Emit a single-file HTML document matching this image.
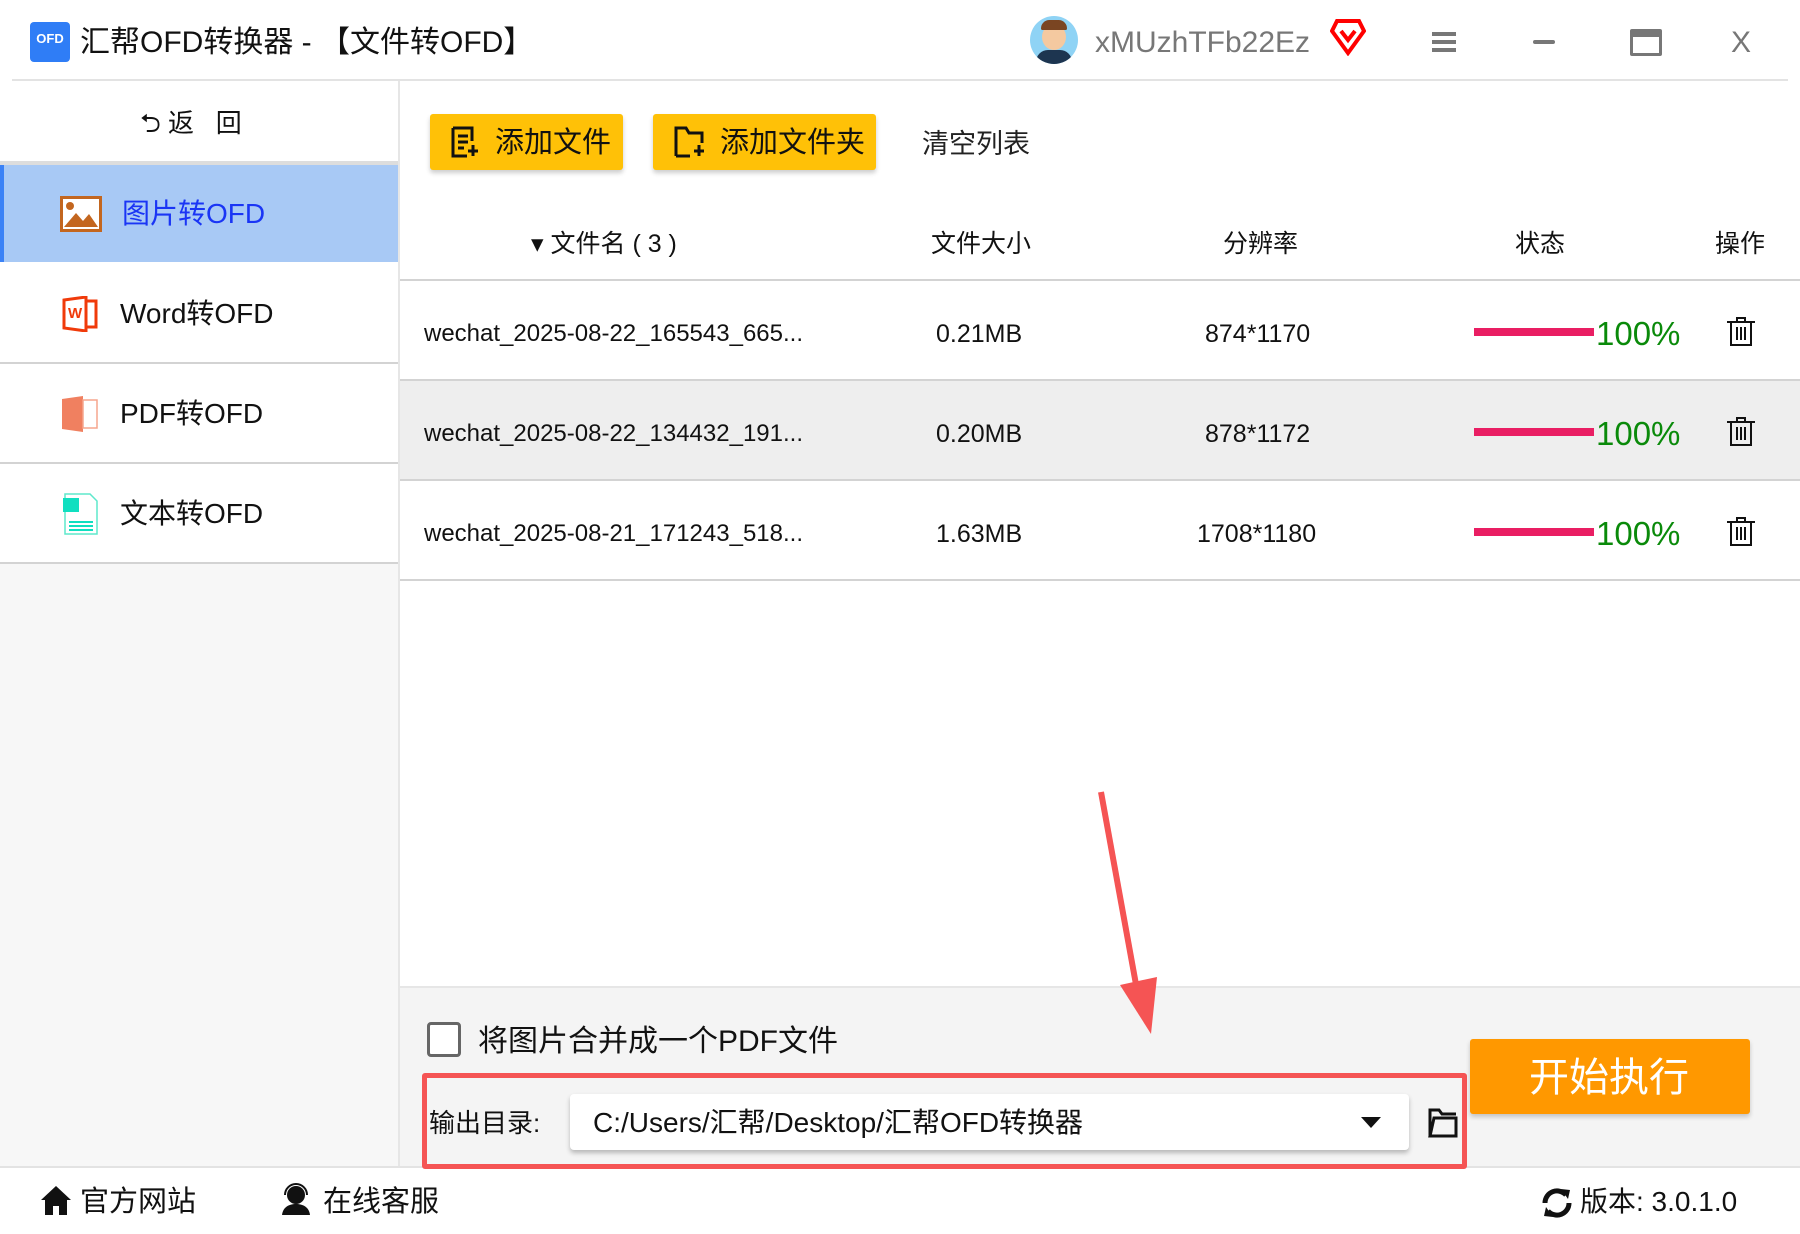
<!DOCTYPE html>
<html><head><meta charset="utf-8"><style>
*{margin:0;padding:0;box-sizing:border-box}
body{width:1800px;height:1234px;position:relative;background:#fff;font-family:"Liberation Sans","Noto Sans CJK SC",sans-serif;color:#111;overflow:hidden}
.a{position:absolute}
.t{position:absolute;white-space:nowrap;line-height:1}
</style></head><body>
<!-- title bar -->
<div class="a" style="left:30px;top:22px;width:40px;height:40px;background:#2f7df6;border-radius:4px;color:#fff;font-size:13px;font-weight:bold;text-align:center;line-height:34px">OFD</div>
<div class="t" style="left:80px;top:28px;font-size:30px">汇帮OFD转换器 - 【文件转OFD】</div>
<div class="a" style="left:1030px;top:16px;width:48px;height:48px;border-radius:50%;background:#8fd3f5;overflow:hidden">
<div class="a" style="left:12px;top:8px;width:24px;height:26px;border-radius:50%;background:#f4c9a0"></div>
<div class="a" style="left:11px;top:4px;width:26px;height:10px;border-radius:10px 10px 2px 2px;background:#7a4522"></div>
<div class="a" style="left:6px;top:34px;width:36px;height:20px;border-radius:12px 12px 0 0;background:#1d3550"></div></div>
<div class="t" style="left:1095px;top:28px;font-size:30px;color:#777">xMUzhTFb22Ez</div>
<svg class="a" style="left:1330px;top:18px" width="36" height="38" viewBox="0 0 36 38"><path d="M7 3h22l5 10-16 22L2 13z" fill="none" stroke="#f00" stroke-width="4"/><path d="M11 13l7 9 7-9" fill="none" stroke="#f00" stroke-width="4"/></svg>
<div class="a" style="left:1432px;top:32px;width:24px;height:4px;background:#777"></div>
<div class="a" style="left:1432px;top:40px;width:24px;height:4px;background:#777"></div>
<div class="a" style="left:1432px;top:48px;width:24px;height:4px;background:#777"></div>
<div class="a" style="left:1533px;top:40px;width:22px;height:4px;background:#777;border-radius:2px"></div>
<div class="a" style="left:1630px;top:29px;width:32px;height:27px;border:3px solid #777;border-top-width:8px;border-radius:2px"></div>
<div class="t" style="left:1731px;top:28px;font-size:30px;color:#777">X</div>
<div class="a" style="left:12px;top:79px;width:1776px;height:2px;background:#e3e3e3"></div>

<!-- sidebar -->
<div class="a" style="left:0;top:81px;width:398px;height:1087px;background:#f7f7f7"></div>
<div class="a" style="left:0;top:81px;width:398px;height:80px;background:#fff"></div>
<div class="t" style="left:140px;top:110px;font-size:26px">⮌ 返&nbsp;&nbsp;&nbsp;回</div>
<div class="a" style="left:0;top:161px;width:398px;height:4px;background:#ddd"></div>
<div class="a" style="left:0;top:165px;width:398px;height:97px;background:#a8c9f5;border-left:4px solid #3b82f6"></div>
<svg class="a" style="left:60px;top:196px" width="42" height="36" viewBox="0 0 42 36"><rect x="1.5" y="1.5" width="39" height="33" fill="#fff" stroke="#c3661f" stroke-width="3"/><circle cx="10" cy="10" r="4" fill="#c3661f"/><path d="M4 31l12-14 7 8 6-7 9 13z" fill="#c3661f"/></svg>
<div class="t" style="left:122px;top:200px;font-size:28px;color:#1a35f5">图片转OFD</div>
<div class="a" style="left:0;top:262px;width:398px;height:301px;background:#fff"></div>
<div class="a" style="left:0;top:362px;width:398px;height:2px;background:#d3d3d3"></div>
<div class="a" style="left:0;top:462px;width:398px;height:2px;background:#d3d3d3"></div>
<div class="a" style="left:0;top:562px;width:398px;height:2px;background:#d3d3d3"></div>
<svg class="a" style="left:62px;top:296px" width="36" height="36" viewBox="0 0 36 36"><path d="M2 4l22-3v34L2 32z" fill="#fff" stroke="#f03a0a" stroke-width="3"/><path d="M24 5h10v26H24" fill="none" stroke="#f03a0a" stroke-width="3"/><text x="6" y="22" font-size="15" font-weight="bold" fill="#f03a0a" font-family="Liberation Sans">W</text></svg>
<div class="t" style="left:120px;top:300px;font-size:28px">Word转OFD</div>
<svg class="a" style="left:62px;top:396px" width="36" height="36" viewBox="0 0 36 36"><path d="M0 3l21-3v36L0 33z" fill="#f08060"/><rect x="21" y="4" width="14" height="28" fill="#fff" stroke="#f5a58d" stroke-width="1.5"/></svg>
<div class="t" style="left:120px;top:400px;font-size:28px">PDF转OFD</div>
<svg class="a" style="left:62px;top:493px" width="36" height="42" viewBox="0 0 36 42"><path d="M3 1h25l7 7v33H3z" fill="#fff" stroke="#5ee8cc" stroke-width="1.5"/><rect x="1" y="5" width="16" height="14" fill="#10dfc0"/><path d="M7 29h24M7 33h24M7 37h24" stroke="#10dfc0" stroke-width="2"/></svg>
<div class="t" style="left:120px;top:500px;font-size:28px">文本转OFD</div>
<div class="a" style="left:398px;top:81px;width:2px;height:1087px;background:#e6e6e6"></div>

<!-- toolbar -->
<div class="a" style="left:430px;top:114px;width:193px;height:56px;background:#ffc107;border-radius:3px;box-shadow:0 3px 5px rgba(0,0,0,.2)"></div>
<svg class="a" style="left:450px;top:126px" width="30" height="32" viewBox="0 0 30 32"><path d="M3 2h19v13M3 2v28h14" fill="none" stroke="#111" stroke-width="3"/><path d="M8 10h10M8 16h10M8 22h6M23 19v11M18 25h10" stroke="#111" stroke-width="3"/></svg>
<div class="t" style="left:495px;top:129px;font-size:29px">添加文件</div>
<div class="a" style="left:653px;top:114px;width:223px;height:56px;background:#ffc107;border-radius:3px;box-shadow:0 3px 5px rgba(0,0,0,.2)"></div>
<svg class="a" style="left:673px;top:126px" width="34" height="32" viewBox="0 0 34 32"><path d="M3 30V2h10l3 5h13v10M3 30h14" fill="none" stroke="#111" stroke-width="3"/><path d="M26 19v11M21 25h10" stroke="#111" stroke-width="3"/></svg>
<div class="t" style="left:720px;top:129px;font-size:29px">添加文件夹</div>
<div class="t" style="left:922px;top:131px;font-size:27px;color:#222">清空列表</div>

<!-- table header -->
<div class="t" style="left:531px;top:232px;font-size:25px">▾ 文件名 ( 3 )</div>
<div class="t" style="left:931px;top:232px;font-size:25px">文件大小</div>
<div class="t" style="left:1223px;top:232px;font-size:25px">分辨率</div>
<div class="t" style="left:1515px;top:232px;font-size:25px">状态</div>
<div class="t" style="left:1715px;top:232px;font-size:25px">操作</div>
<div class="a" style="left:400px;top:279px;width:1400px;height:2px;background:#d3d3d3"></div>
<div class="a" style="left:400px;top:381px;width:1400px;height:99px;background:#eeeeee"></div>
<div class="a" style="left:400px;top:379px;width:1400px;height:2px;background:#d3d3d3"></div>
<div class="a" style="left:400px;top:479px;width:1400px;height:2px;background:#d3d3d3"></div>
<div class="a" style="left:400px;top:579px;width:1400px;height:2px;background:#d3d3d3"></div>

<div class="t" style="left:424px;top:322px;font-size:24px">wechat_2025-08-22_165543_665...</div>
<div class="t" style="left:936px;top:322px;font-size:25px">0.21MB</div>
<div class="t" style="left:1205px;top:322px;font-size:25px">874*1170</div>
<div class="t" style="left:424px;top:422px;font-size:24px">wechat_2025-08-22_134432_191...</div>
<div class="t" style="left:936px;top:422px;font-size:25px">0.20MB</div>
<div class="t" style="left:1205px;top:422px;font-size:25px">878*1172</div>
<div class="t" style="left:424px;top:522px;font-size:24px">wechat_2025-08-21_171243_518...</div>
<div class="t" style="left:936px;top:522px;font-size:25px">1.63MB</div>
<div class="t" style="left:1197px;top:522px;font-size:25px">1708*1180</div>

<div class="a" style="left:1474px;top:328px;width:120px;height:8px;background:#e91e63"></div>
<div class="a" style="left:1474px;top:428px;width:120px;height:8px;background:#e91e63"></div>
<div class="a" style="left:1474px;top:528px;width:120px;height:8px;background:#e91e63"></div>
<div class="t" style="left:1596px;top:317px;font-size:33px;color:#0a8a0a">100%</div>
<div class="t" style="left:1596px;top:417px;font-size:33px;color:#0a8a0a">100%</div>
<div class="t" style="left:1596px;top:517px;font-size:33px;color:#0a8a0a">100%</div>
<svg class="a" style="left:1726px;top:317px" width="30" height="30" viewBox="0 0 30 30"><path d="M1 5h28M11 5V1h8v4M5 5v23h20V5M11 10v13M15 10v13M19 10v13" fill="none" stroke="#111" stroke-width="2"/></svg>
<svg class="a" style="left:1726px;top:417px" width="30" height="30" viewBox="0 0 30 30"><path d="M1 5h28M11 5V1h8v4M5 5v23h20V5M11 10v13M15 10v13M19 10v13" fill="none" stroke="#111" stroke-width="2"/></svg>
<svg class="a" style="left:1726px;top:517px" width="30" height="30" viewBox="0 0 30 30"><path d="M1 5h28M11 5V1h8v4M5 5v23h20V5M11 10v13M15 10v13M19 10v13" fill="none" stroke="#111" stroke-width="2"/></svg>

<!-- bottom panel -->
<div class="a" style="left:400px;top:986px;width:1400px;height:182px;background:#f4f4f4;border-top:2px solid #e6e6e6"></div>
<div class="a" style="left:0;top:1166px;width:1800px;height:2px;background:#e3e3e3"></div>
<div class="a" style="left:427px;top:1022px;width:34px;height:35px;border:3px solid #666;border-radius:4px;background:#fff"></div>
<div class="t" style="left:478px;top:1027px;font-size:30px">将图片合并成一个PDF文件</div>
<div class="a" style="left:422px;top:1073px;width:1045px;height:96px;border:5px solid #f55454;border-radius:3px"></div>
<div class="t" style="left:429px;top:1110px;font-size:26px">输出目录:</div>
<div class="a" style="left:570px;top:1094px;width:839px;height:56px;background:#fff;border-radius:4px;box-shadow:0 3px 5px rgba(0,0,0,.25)"></div>
<div class="t" style="left:593px;top:1109px;font-size:28px">C:/Users/汇帮/Desktop/汇帮OFD转换器</div>
<div class="a" style="left:1361px;top:1117px;width:0;height:0;border-left:10px solid transparent;border-right:10px solid transparent;border-top:11px solid #111"></div>
<svg class="a" style="left:1428px;top:1106px" width="30" height="32" viewBox="0 0 30 32"><path d="M2 30V4h9l3 4h14M2 30h26V12H6z" fill="none" stroke="#111" stroke-width="3"/></svg>
<div class="a" style="left:1470px;top:1039px;width:280px;height:75px;background:#ff9800;border-radius:3px;box-shadow:0 3px 5px rgba(0,0,0,.2)"></div>
<div class="t" style="left:1529px;top:1058px;font-size:40px;color:#fff">开始执行</div>
<!-- arrow -->
<svg class="a" style="left:0;top:0" width="1800" height="1234"><path d="M1101 792L1137 990" stroke="#f55454" stroke-width="6"/><path d="M1120 985l31 49 6-57z" fill="#f55454"/></svg>

<!-- footer -->
<svg class="a" style="left:40px;top:1184px" width="32" height="32" viewBox="0 0 32 32"><path d="M16 2L1 16h4v15h8v-9h6v9h8V16h4z" fill="#111"/></svg>
<div class="t" style="left:80px;top:1188px;font-size:29px">官方网站</div>
<svg class="a" style="left:280px;top:1183px" width="32" height="32" viewBox="0 0 32 32"><circle cx="16" cy="12" r="9" fill="#111"/><path d="M5 12a11 11 0 0122 0" fill="none" stroke="#111" stroke-width="2"/><path d="M2 32c1-8 7-11 14-11s13 3 14 11z" fill="#111"/></svg>
<div class="t" style="left:323px;top:1188px;font-size:29px">在线客服</div>
<svg class="a" style="left:1541px;top:1186px" width="32" height="34" viewBox="0 0 32 34"><path d="M4 17a12 12 0 0121-8M28 17a12 12 0 01-21 8" fill="none" stroke="#111" stroke-width="5"/><path d="M20 3l9 1-2 9zM12 31l-9-1 2-9z" fill="#111"/></svg>
<div class="t" style="left:1580px;top:1188px;font-size:28px">版本: 3.0.1.0</div>
</body></html>
